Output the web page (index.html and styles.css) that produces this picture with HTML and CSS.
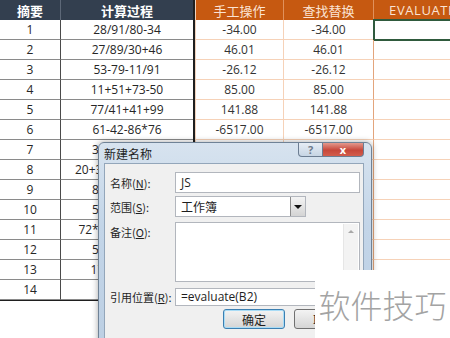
FILE: index.html
```html
<!DOCTYPE html>
<html>
<head>
<meta charset="utf-8">
<link rel="stylesheet" href="styles.css">
</head>
<body>

<div class="page">
  <div class="sheet">

    <!-- left table: summary + expression -->
    <div class="tbl tbl-left">
      <div class="hd">摘要</div><div class="hd">计算过程</div>
      <div class="c">1</div><div class="c">28/91/80-34</div>
      <div class="c">2</div><div class="c">27/89/30+46</div>
      <div class="c">3</div><div class="c">53-79-11/91</div>
      <div class="c">4</div><div class="c">11+51+73-50</div>
      <div class="c">5</div><div class="c">77/41+41+99</div>
      <div class="c">6</div><div class="c">61-42-86*76</div>
      <div class="c">7</div><div class="c">39-64+27/18</div>
      <div class="c">8</div><div class="c">20+35*47-12/66+9</div>
      <div class="c">9</div><div class="c">84/33-15+62</div>
      <div class="c">10</div><div class="c">56+19-73/44</div>
      <div class="c">11</div><div class="c">72*14+58-31/6+4</div>
      <div class="c">12</div><div class="c">58/26+93-17</div>
      <div class="c">13</div><div class="c">17+68/52*40</div>
      <div class="c">14</div><div class="c"></div>
    </div>

    <!-- empty spacer column -->
    <div class="gap">
      <div></div><div></div><div></div><div></div><div></div><div></div>
      <div></div><div></div><div></div><div></div><div></div><div></div>
      <div></div><div></div><div></div><div></div><div></div>
    </div>

    <!-- right table: results -->
    <div class="tbl tbl-right">
      <div class="hd">手工操作</div><div class="hd">查找替换</div><div class="hd ev">EVALUATE</div>
      <div class="c">-34.00</div><div class="c">-34.00</div><div class="c sel"></div>
      <div class="c">46.01</div><div class="c">46.01</div><div class="c"></div>
      <div class="c">-26.12</div><div class="c">-26.12</div><div class="c"></div>
      <div class="c">85.00</div><div class="c">85.00</div><div class="c"></div>
      <div class="c">141.88</div><div class="c">141.88</div><div class="c"></div>
      <div class="c">-6517.00</div><div class="c">-6517.00</div><div class="c"></div>
      <div class="c"></div><div class="c"></div><div class="c"></div>
      <div class="c"></div><div class="c"></div><div class="c"></div>
      <div class="c"></div><div class="c"></div><div class="c"></div>
      <div class="c"></div><div class="c"></div><div class="c"></div>
      <div class="c"></div><div class="c"></div><div class="c"></div>
      <div class="c"></div><div class="c"></div><div class="c"></div>
      <div class="c"></div><div class="c"></div><div class="c"></div>
      <div class="c"></div><div class="c"></div><div class="c"></div>
      <div class="c"></div><div class="c"></div><div class="c"></div>
      <div class="c"></div><div class="c"></div><div class="c"></div>
    </div>
  </div>

  <!-- "New Name" dialog -->
  <div class="dialog">
    <div class="titlebar">
      <span class="title">新建名称</span>
      <span class="cap-btns">
        <span class="btn-help">?</span>
        <span class="btn-close">x</span>
      </span>
    </div>
    <div class="panel">
      <div class="row row-name">
        <label>名称(<u>N</u>):</label>
        <div class="field">JS</div>
      </div>
      <div class="row row-scope">
        <label>范围(<u>S</u>):</label>
        <div class="select">
          <span class="select-text">工作簿</span>
          <span class="select-arrow"></span>
        </div>
      </div>
      <div class="row row-note">
        <label>备注(<u>O</u>):</label>
        <div class="textarea">
          <span class="scrollbar"><span class="up"></span></span>
        </div>
      </div>
      <div class="row row-ref">
        <label>引用位置(<u>R</u>):</label>
        <div class="field field-ref">=evaluate(B2)</div>
      </div>
      <div class="buttons">
        <span class="btn btn-ok">确定</span>
        <span class="btn">取消</span>
      </div>
    </div>
  </div>

  <div class="watermark">软件技巧</div>
</div>

</body>
</html>
```

FILE: styles.css
```css
* {
  box-sizing: border-box;
}

body {
  margin: 0;
  background: #fff;
  font-family: "Open Sans", "Noto Sans CJK SC", sans-serif;
  color: #262626;
}

.page {
  position: relative;
  width: 450px;
  height: 338px;
  overflow: hidden;
}

/* spreadsheet area */
.sheet {
  display: flex;
  align-items: flex-start;
}

.tbl {
  display: grid;
  grid-auto-rows: 20px;
  font-size: 12px;
}

.tbl .hd,
.tbl .c {
  display: flex;
  align-items: center;
  justify-content: center;
  white-space: nowrap;
  overflow: hidden;
}

/* left table */
.tbl-left {
  grid-template-columns: 61px 132px;
  border-right: 2px solid #1f1f1f;
  border-bottom: 1px solid #1f1f1f;
}

.tbl-left .hd {
  background: #333f4f;
  color: #fff;
  font-family: "Noto Sans CJK SC", sans-serif;
  font-weight: bold;
  font-size: 13px;
}

.tbl-left .hd:first-child {
  border-right: 1px solid #5d6878;
}

.tbl-left .c {
  border-bottom: 1px solid #8a8a8a;
}

.tbl-left .c:nth-child(odd) {
  border-right: 1px solid #4a4a4a;
}

/* narrow empty column */
.gap {
  width: 7px;
  display: grid;
  grid-auto-rows: 20px;
}

.gap div {
  border-bottom: 1px solid #dedede;
}

/* right table */
.tbl-right {
  grid-template-columns: 88px 90px 98px;
  flex-shrink: 0;
  border-left: 1px solid #f1d2bc;
}

.tbl-right .hd {
  background: #c65911;
  color: #fbe3d3;
  font-family: "Noto Sans CJK SC", sans-serif;
  font-size: 13px;
  border-right: 1px solid #e0915c;
}

.tbl-right .hd.ev {
  font-family: "Open Sans", sans-serif;
  letter-spacing: 0.6px;
}

.tbl-right .c {
  border-bottom: 1px solid #f6d2b8;
  border-right: 1px solid #f6d2b8;
  color: #333;
}

.tbl-right .c:nth-child(3n+2) {
  border-right: 1px solid #e3a57c;
}

.tbl-right .c.sel {
  outline: 2px solid #2f5a3d;
  outline-offset: -1px;
}

/* dialog */
.dialog {
  position: absolute;
  left: 98px;
  top: 142px;
  width: 274px;
  height: 210px;
  border: 1px solid #6f8296;
  border-radius: 6px 6px 0 0;
  background: linear-gradient(#d7e3ef, #c3d5e8 40%, #bccfe3);
  box-shadow: 0 0 6px rgba(0, 0, 0, 0.35);
  font-family: "Noto Sans CJK SC", sans-serif;
  font-size: 11px;
  color: #1e1e1e;
}

.titlebar {
  display: flex;
  height: 20px;
}

.title {
  padding-left: 5px;
  line-height: 21px;
  font-size: 12px;
}

.cap-btns {
  display: flex;
  margin-left: auto;
  margin-right: 7px;
}

.btn-help,
.btn-close {
  height: 14px;
  display: flex;
  align-items: center;
  justify-content: center;
  border: 1px solid #6c7d92;
  border-top: none;
  font-family: "Open Sans", sans-serif;
  font-weight: bold;
  font-size: 11px;
}

.btn-help {
  width: 25px;
  border-radius: 0 0 0 4px;
  background: linear-gradient(#e6edf5, #c7d5e4);
  color: #6d7b8c;
}

.btn-close {
  width: 41px;
  border-left: none;
  border-radius: 0 0 4px 0;
  background: linear-gradient(#e3998d, #c7473a 55%, #d35d4c);
  color: #fff;
}

.panel {
  height: 200px;
  margin: 0 7px 0 5px;
  padding: 8px 0 0 5px;
  border: 1px solid #93a6ba;
  background: #f0f0f0;
}

.row {
  display: grid;
  grid-template-columns: 65px 185px;
  align-items: center;
}

.row label {
  white-space: nowrap;
}

.row-scope {
  margin-top: 3px;
}

.row-note {
  margin-top: 5px;
  align-items: start;
}

.row-note label {
  padding-top: 2px;
}

.row-ref {
  margin-top: 6px;
}

.field {
  height: 21px;
  padding-left: 5px;
  line-height: 20px;
  background: #fff;
  border: 1px solid #b2b6bd;
  font-family: "Open Sans", sans-serif;
  font-size: 12px;
}

.field-ref {
  height: 18px;
  line-height: 16px;
}

.select {
  display: flex;
  width: 131px;
  height: 21px;
  background: #fff;
  border: 1px solid #b2b6bd;
  font-size: 12px;
}

.select-text {
  flex: 1;
  padding-left: 5px;
  line-height: 19px;
}

.select-arrow {
  position: relative;
  width: 15px;
  border-left: 1px solid #8c8c8c;
  background: linear-gradient(#f4f4f4, #d4d4d4);
}

.select-arrow::after {
  content: "";
  position: absolute;
  left: 3px;
  top: 8px;
  border-left: 4px solid transparent;
  border-right: 4px solid transparent;
  border-top: 4px solid #111;
}

.textarea {
  display: flex;
  justify-content: flex-end;
  height: 60px;
  padding: 1px;
  background: #fff;
  border: 1px solid #b2b6bd;
}

.scrollbar {
  position: relative;
  width: 15px;
  background: #f3f3f3;
  border-left: 1px solid #e6e6e6;
}

.scrollbar .up {
  position: absolute;
  left: 4px;
  top: 6px;
  border-left: 3px solid transparent;
  border-right: 3px solid transparent;
  border-bottom: 3px solid #a8a8a8;
}

.buttons {
  display: flex;
  gap: 9px;
  margin: 3px 0 0 113px;
}

.btn {
  width: 62px;
  height: 20px;
  display: flex;
  align-items: center;
  justify-content: center;
  border: 1px solid #707070;
  border-radius: 3px;
  background: linear-gradient(#f3f3f3, #e4e4e4 50%, #d5d5d5);
  font-size: 12px;
}

.btn-ok {
  border-color: #3c7fb1;
  box-shadow: inset 0 0 0 1px #a9dcf6;
}

/* site watermark in the corner */
.watermark {
  position: absolute;
  left: 315px;
  top: 270px;
  right: 0;
  bottom: 0;
  display: flex;
  align-items: center;
  justify-content: center;
  background: #fff;
  color: #a3a3a3;
  font-family: "Noto Sans CJK SC", sans-serif;
  font-weight: 300;
  font-size: 32px;
}
```
